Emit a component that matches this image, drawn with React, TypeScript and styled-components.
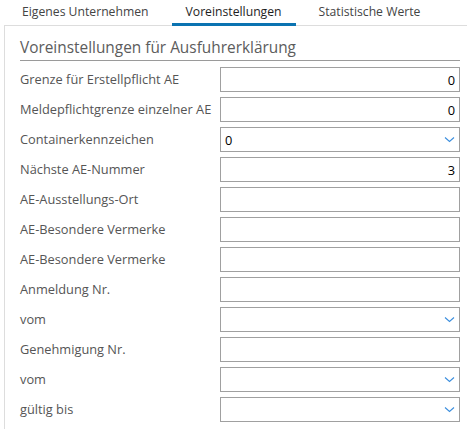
import React from "react";
import styled, { createGlobalStyle } from "styled-components";

const Global = createGlobalStyle`
  html, body { margin: 0; padding: 0; background: #fff; }
  body { font-family: "Open Sans", "Noto Sans", sans-serif; }
  * { box-sizing: border-box; }
`;

const Page = styled.div`
  width: 467px;
  height: 429px;
  overflow: hidden;
  background: #fff;
`;

const TabBar = styled.div`
  display: flex;
  height: 26px;
  padding-left: 8px;
  gap: 9px;
  margin-bottom: -1px;
  position: relative;
  z-index: 1;
`;

const Tab = styled.div<{ $active?: boolean }>`
  padding: 0 14px;
  height: 26px;
  line-height: 23px;
  font-size: 12.2px;
  color: ${(p) => (p.$active ? "#1e1e1e" : "#444")};
  border-bottom: 3px solid ${(p) => (p.$active ? "#0a73b1" : "transparent")};
  white-space: nowrap;
`;

const Panel = styled.div`
  margin-left: 4px;
  border-left: 1px solid #ddd;
  border-top: 1px solid #ddd;
  padding: 0 7px 0 15px;
  height: 404px;
`;

const Title = styled.div`
  padding-top: 10px;
  line-height: 24px;
  font-size: 15.4px;
  color: #5c5c5c;
  border-bottom: 1px solid #9a9a9a;
`;

const Form = styled.div`
  display: grid;
  grid-template-columns: 200px 240px;
  row-gap: 5px;
  padding-top: 6px;
`;

const Label = styled.div`
  height: 25px;
  line-height: 25px;
  font-size: 12.8px;
  color: #555;
  white-space: nowrap;
`;

const Field = styled.div<{ $align?: "left" | "right" }>`
  height: 25px;
  border: 1px solid #a0a0a0;
  display: flex;
  align-items: center;
  justify-content: ${(p) => (p.$align === "right" ? "flex-end" : "space-between")};
  padding: 0 4px;
  font-size: 12.8px;
  color: #000;
`;

const Chevron = styled.svg`
  width: 11px;
  height: 7px;
  flex: none;
`;

const Arrow = () => (
  <Chevron viewBox="0 0 11 7">
    <path d="M1 1.5 L5.5 5.5 L10 1.5" fill="none" stroke="#3b8ede" strokeWidth="1.1" />
  </Chevron>
);

type Row = { label: string; kind: "num" | "text" | "select"; value?: string };

const rows: Row[] = [
  { label: "Grenze für Erstellpflicht AE", kind: "num", value: "0" },
  { label: "Meldepflichtgrenze einzelner AE", kind: "num", value: "0" },
  { label: "Containerkennzeichen", kind: "select", value: "0" },
  { label: "Nächste AE-Nummer", kind: "num", value: "3" },
  { label: "AE-Ausstellungs-Ort", kind: "text" },
  { label: "AE-Besondere Vermerke", kind: "text" },
  { label: "AE-Besondere Vermerke", kind: "text" },
  { label: "Anmeldung Nr.", kind: "text" },
  { label: "vom", kind: "select" },
  { label: "Genehmigung Nr.", kind: "text" },
  { label: "vom", kind: "select" },
  { label: "gültig bis", kind: "select" },
];

export default function App() {
  return (
    <Page>
      <Global />
      <TabBar>
        <Tab>Eigenes Unternehmen</Tab>
        <Tab $active>Voreinstellungen</Tab>
        <Tab>Statistische Werte</Tab>
      </TabBar>
      <Panel>
        <Title>Voreinstellungen für Ausfuhrerklärung</Title>
        <Form>
          {rows.map((r, i) => (
            <React.Fragment key={i}>
              <Label>{r.label}</Label>
              {r.kind === "select" ? (
                <Field>
                  <span>{r.value ?? ""}</span>
                  <Arrow />
                </Field>
              ) : (
                <Field $align="right">{r.value ?? ""}</Field>
              )}
            </React.Fragment>
          ))}
        </Form>
      </Panel>
    </Page>
  );
}
